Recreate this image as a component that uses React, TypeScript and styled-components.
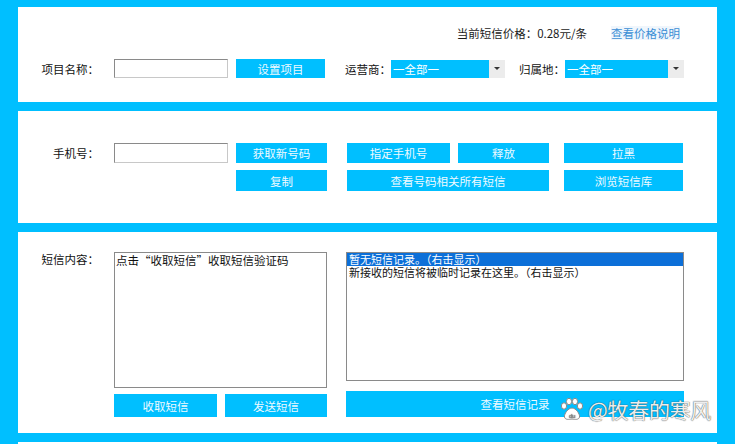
import React from "react";
import styled, { createGlobalStyle } from "styled-components";

const Global = createGlobalStyle`
  html, body { margin: 0; padding: 0; }
  body {
    background: #00bfff;
    font-family: "Noto Sans CJK SC", "Noto Sans", sans-serif;
    font-size: 11.5px;
    color: #1a1a1a;
    overflow: hidden;
  }
`;

const BLUE = "#00bfff";

const Page = styled.div`
  position: relative;
  width: 735px;
  height: 444px;
  box-sizing: border-box;
  padding: 7px 18px 0 18px;
  display: flex;
  flex-direction: column;
  gap: 9px;
  overflow: hidden;
`;

const Panel = styled.section<{ $h: number; $pt: number }>`
  background: #fff;
  height: ${(p) => p.$h}px;
  box-sizing: border-box;
  padding-top: ${(p) => p.$pt}px;
  flex-shrink: 0;
`;

const PriceRow = styled.div`
  display: flex;
  justify-content: flex-end;
  align-items: center;
  height: 14px;
  padding-right: 37px;
  line-height: 14px;
`;

const Price = styled.span`
  color: #1a1a1a;
`;

const PriceLink = styled.a`
  margin-left: 24px;
  color: #3c8fd6;
  background: #f0f6fc;
  text-decoration: none;
  cursor: pointer;
`;

const Row = styled.div<{ $mt?: number }>`
  display: flex;
  align-items: center;
  margin-top: ${(p) => p.$mt ?? 0}px;
`;

const Label = styled.div<{ $w?: number; $ml?: number; $pr?: number; $align?: string }>`
  width: ${(p) => (p.$w ? `${p.$w}px` : "auto")};
  margin-left: ${(p) => p.$ml ?? 0}px;
  padding-right: ${(p) => p.$pr ?? 0}px;
  box-sizing: border-box;
  text-align: ${(p) => p.$align ?? "right"};
  line-height: 14px;
  white-space: nowrap;
  flex-shrink: 0;
  color: #111;
`;

const Input = styled.div<{ $h: number }>`
  width: 114px;
  height: ${(p) => p.$h}px;
  box-sizing: border-box;
  border: 1px solid #8a8a8a;
  border-right-color: #c8c8c8;
  border-bottom-color: #c8c8c8;
  background: #fff;
  flex-shrink: 0;
`;

const Btn = styled.div<{ $w?: number; $h: number; $ml?: number }>`
  width: ${(p) => (p.$w ? `${p.$w}px` : "auto")};
  height: ${(p) => p.$h}px;
  margin-left: ${(p) => p.$ml ?? 0}px;
  background: ${BLUE};
  color: #eefaff;
  display: flex;
  align-items: center;
  justify-content: center;
  white-space: nowrap;
  flex-shrink: 0;
  box-sizing: border-box;
`;

const Select = styled.div<{ $w: number }>`
  width: ${(p) => p.$w}px;
  height: 18px;
  display: flex;
  background: #ececec;
  flex-shrink: 0;
`;

const SelectValue = styled.div`
  flex: 1;
  background: ${BLUE};
  color: #fff;
  line-height: 18px;
  padding-left: 2px;
`;

const SelectArrow = styled.div`
  width: 16px;
  display: flex;
  align-items: center;
  justify-content: center;
  &::after {
    content: "";
    border-left: 3px solid transparent;
    border-right: 3px solid transparent;
    border-top: 3px solid #333;
  }
`;

const PhoneGrid = styled.div`
  display: grid;
  grid-template-columns: 96px 114px 8px 91px 20px 103px 8px 91px 15px 119px;
  grid-template-rows: 20px 21px;
  row-gap: 7px;
  align-items: center;
`;

const Cell = styled.div<{ $col: string; $row: number }>`
  grid-column: ${(p) => p.$col};
  grid-row: ${(p) => p.$row};
  height: 100%;
  display: flex;
  align-items: stretch;
  & > * { flex: 1; height: auto; }
`;

const PhoneLabel = styled(Label)`
  line-height: 20px;
`;

const SmsGrid = styled.div`
  display: grid;
  grid-template-columns: 96px 213px 19px 338px;
  align-items: start;
`;

const Col = styled.div<{ $col: number; $gap: number }>`
  grid-column: ${(p) => p.$col};
  display: flex;
  flex-direction: column;
  gap: ${(p) => p.$gap}px;
`;

const TextArea = styled.div`
  height: 136px;
  box-sizing: border-box;
  border: 1px solid #8a8a8a;
  padding: 0 1px;
  color: #111;
  line-height: 14px;
  font-size: 11.5px;
`;

const BtnRow = styled.div`
  display: flex;
  justify-content: space-between;
`;

const ListBox = styled.div`
  height: 129px;
  box-sizing: border-box;
  border: 1px solid #8a8a8a;
  padding: 0;
  font-size: 11px;
  line-height: 13px;
  color: #111;
`;

const ListItem = styled.div<{ $sel?: boolean }>`
  padding-left: 2px;
  height: 13px;
  white-space: nowrap;
  background: ${(p) => (p.$sel ? "#0c6fd8" : "transparent")};
  color: ${(p) => (p.$sel ? "#fff" : "#111")};
`;

const Watermark = styled.div`
  position: absolute;
  left: 559px;
  top: 396px;
  display: flex;
  align-items: center;
  gap: 3px;
  color: rgba(255, 255, 255, 0.92);
  font-size: 21px;
  line-height: 26px;
  text-shadow: 0 0 1px rgba(60, 60, 60, 0.9), 0 0 1px rgba(60, 60, 60, 0.6);
  letter-spacing: -0.3px;
  pointer-events: none;
`;

const Paw = () => (
  <svg width="26" height="24" viewBox="0 0 26 24">
    <g fill="#fff" stroke="#8a8a8a" strokeWidth="1">
      <ellipse cx="5" cy="9" rx="2.6" ry="3.2" />
      <ellipse cx="10" cy="4.5" rx="2.6" ry="3.2" />
      <ellipse cx="16" cy="4.5" rx="2.6" ry="3.2" />
      <ellipse cx="21" cy="9" rx="2.6" ry="3.2" />
      <path d="M13 11 C9 11 5 17 5.5 20 C6 23 10 22.5 13 22 C16 22.5 20 23 20.5 20 C21 17 17 11 13 11 Z" />
    </g>
    <text x="13" y="20.5" textAnchor="middle" fontSize="6" fill="#8a8a8a" fontFamily="Liberation Sans, sans-serif">du</text>
  </svg>
);

export default function App() {
  return (
    <>
      <Global />
      <Page>
        <Panel $h={95} $pt={19}>
          <PriceRow>
            <Price>当前短信价格：0.28元/条</Price>
            <PriceLink>查看价格说明</PriceLink>
          </PriceRow>
          <Row $mt={19}>
            <Label $w={96} $pr={15}>项目名称：</Label>
            <Input $h={19} />
            <Btn $w={89} $h={19} $ml={8}>设置项目</Btn>
            <Label $ml={20} $align="left">运营商：</Label>
            <Select $w={114}>
              <SelectValue>一全部一</SelectValue>
              <SelectArrow />
            </Select>
            <Label $ml={14} $align="left">归属地：</Label>
            <Select $w={119}>
              <SelectValue>一全部一</SelectValue>
              <SelectArrow />
            </Select>
          </Row>
        </Panel>

        <Panel $h={112} $pt={32}>
          <PhoneGrid>
            <Cell $col="1" $row={1}>
              <PhoneLabel $pr={15}>手机号：</PhoneLabel>
            </Cell>
            <Cell $col="2" $row={1}>
              <Input $h={20} />
            </Cell>
            <Cell $col="4" $row={1}>
              <Btn $h={20}>获取新号码</Btn>
            </Cell>
            <Cell $col="6" $row={1}>
              <Btn $h={20}>指定手机号</Btn>
            </Cell>
            <Cell $col="8" $row={1}>
              <Btn $h={20}>释放</Btn>
            </Cell>
            <Cell $col="10" $row={1}>
              <Btn $h={20}>拉黑</Btn>
            </Cell>
            <Cell $col="4" $row={2}>
              <Btn $h={21}>复制</Btn>
            </Cell>
            <Cell $col="6 / 9" $row={2}>
              <Btn $h={21}>查看号码相关所有短信</Btn>
            </Cell>
            <Cell $col="10" $row={2}>
              <Btn $h={21}>浏览短信库</Btn>
            </Cell>
          </PhoneGrid>
        </Panel>

        <Panel $h={201} $pt={20}>
          <SmsGrid>
            <Label $pr={15}>短信内容：</Label>
            <Col $col={2} $gap={6}>
              <TextArea>点击“收取短信”收取短信验证码</TextArea>
              <BtnRow>
                <Btn $w={103} $h={23}>收取短信</Btn>
                <Btn $w={102} $h={23}>发送短信</Btn>
              </BtnRow>
            </Col>
            <Col $col={4} $gap={10}>
              <ListBox>
                <ListItem $sel>暂无短信记录。（右击显示）</ListItem>
                <ListItem>新接收的短信将被临时记录在这里。（右击显示）</ListItem>
              </ListBox>
              <Btn $h={26}>查看短信记录</Btn>
            </Col>
          </SmsGrid>
        </Panel>

        <Panel $h={40} $pt={0} />

        <Watermark>
          <Paw />
          <span>@牧春的寒风</span>
        </Watermark>
      </Page>
    </>
  );
}
